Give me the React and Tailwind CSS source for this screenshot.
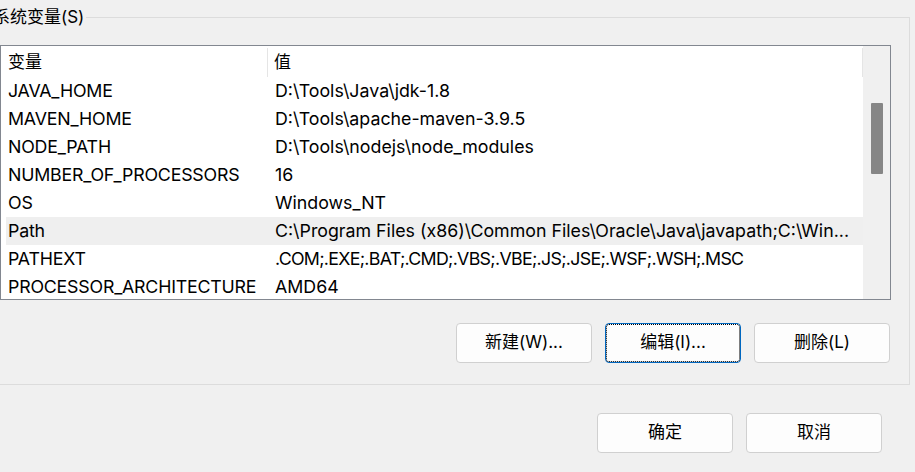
const rows = [
  ['JAVA_HOME', 'D:\\Tools\\Java\\jdk-1.8'],
  ['MAVEN_HOME', 'D:\\Tools\\apache-maven-3.9.5'],
  ['NODE_PATH', 'D:\\Tools\\nodejs\\node_modules'],
  ['NUMBER_OF_PROCESSORS', '16'],
  ['OS', 'Windows_NT'],
  ['Path', 'C:\\Program Files (x86)\\Common Files\\Oracle\\Java\\javapath;C:\\Win...', true],
  ['PATHEXT', '.COM;.EXE;.BAT;.CMD;.VBS;.VBE;.JS;.JSE;.WSF;.WSH;.MSC', false, 'tracking-[-0.7px]'],
  ['PROCESSOR_ARCHITECTURE', 'AMD64'],
]

function Button({ children, focused }) {
  return (
    <button
      className={`flex h-[40px] w-[136px] items-center justify-center rounded-[4px] border bg-[#fdfdfd] text-[17px] text-black ${
        focused ? 'border-[#0067c0] outline outline-1 outline-dotted outline-black outline-offset-[-2px]' : 'border-[#d0d0d0]'
      }`}
    >
      {children}
    </button>
  )
}

export default function App() {
  return (
    <div className="h-[472px] w-[915px] overflow-hidden bg-[#f0f0f0] font-['Inter','Noto_Sans_CJK_SC',sans-serif] text-black">
      <div className="relative ml-[-20px] mt-[17px] h-[368px] w-[930px] border border-[#dcdcdc] pl-[19px] pt-[27px]">
        <span className="absolute left-[12px] top-[-13px] bg-[#f0f0f0] pr-[2px] text-[17px] leading-[24px]">系统变量(S)</span>

        <div className="flex h-[255px] w-[891px] border border-[#828790] bg-white">
          <div className="flex w-[862px] flex-col overflow-hidden">
            <div className="flex h-[31px] shrink-0 items-center pt-[2px] text-[17px]">
              <div className="flex h-[29px] w-[266px] items-center pl-[7px]">变量</div>
              <div className="h-[29px] w-px bg-[#e5e5e5]" />
              <div className="flex h-[29px] flex-1 items-center pl-[6px]">值</div>
              <div className="h-[29px] w-px bg-[#e5e5e5]" />
            </div>
            {rows.map(([name, value, selected, tight]) => (
              <div
                key={name}
                className={`ml-[5px] flex h-[28px] shrink-0 items-center whitespace-nowrap text-[17.8px] ${selected ? 'bg-[#efefef]' : ''}`}
              >
                <div className="w-[268px] pl-[2px] tracking-[-0.2px]">{name}</div>
                <div className={`pl-[1px] ${tight || ''}`}>{value}</div>
              </div>
            ))}
          </div>
          <div className="w-[27px] bg-[#f0f0f0] pl-[8px] pt-[57px]">
            <div className="h-[71px] w-[12px] rounded-[1px] bg-[#868686]" />
          </div>
        </div>

        <div className="mt-[23px] flex w-[890px] justify-end gap-[13px]">
          <Button>新建(W)...</Button>
          <Button focused>编辑(I)...</Button>
          <Button>删除(L)</Button>
        </div>
      </div>

      <div className="mt-[28px] flex w-[882px] justify-end gap-[13px]">
        <Button>确定</Button>
        <Button>取消</Button>
      </div>
    </div>
  )
}
